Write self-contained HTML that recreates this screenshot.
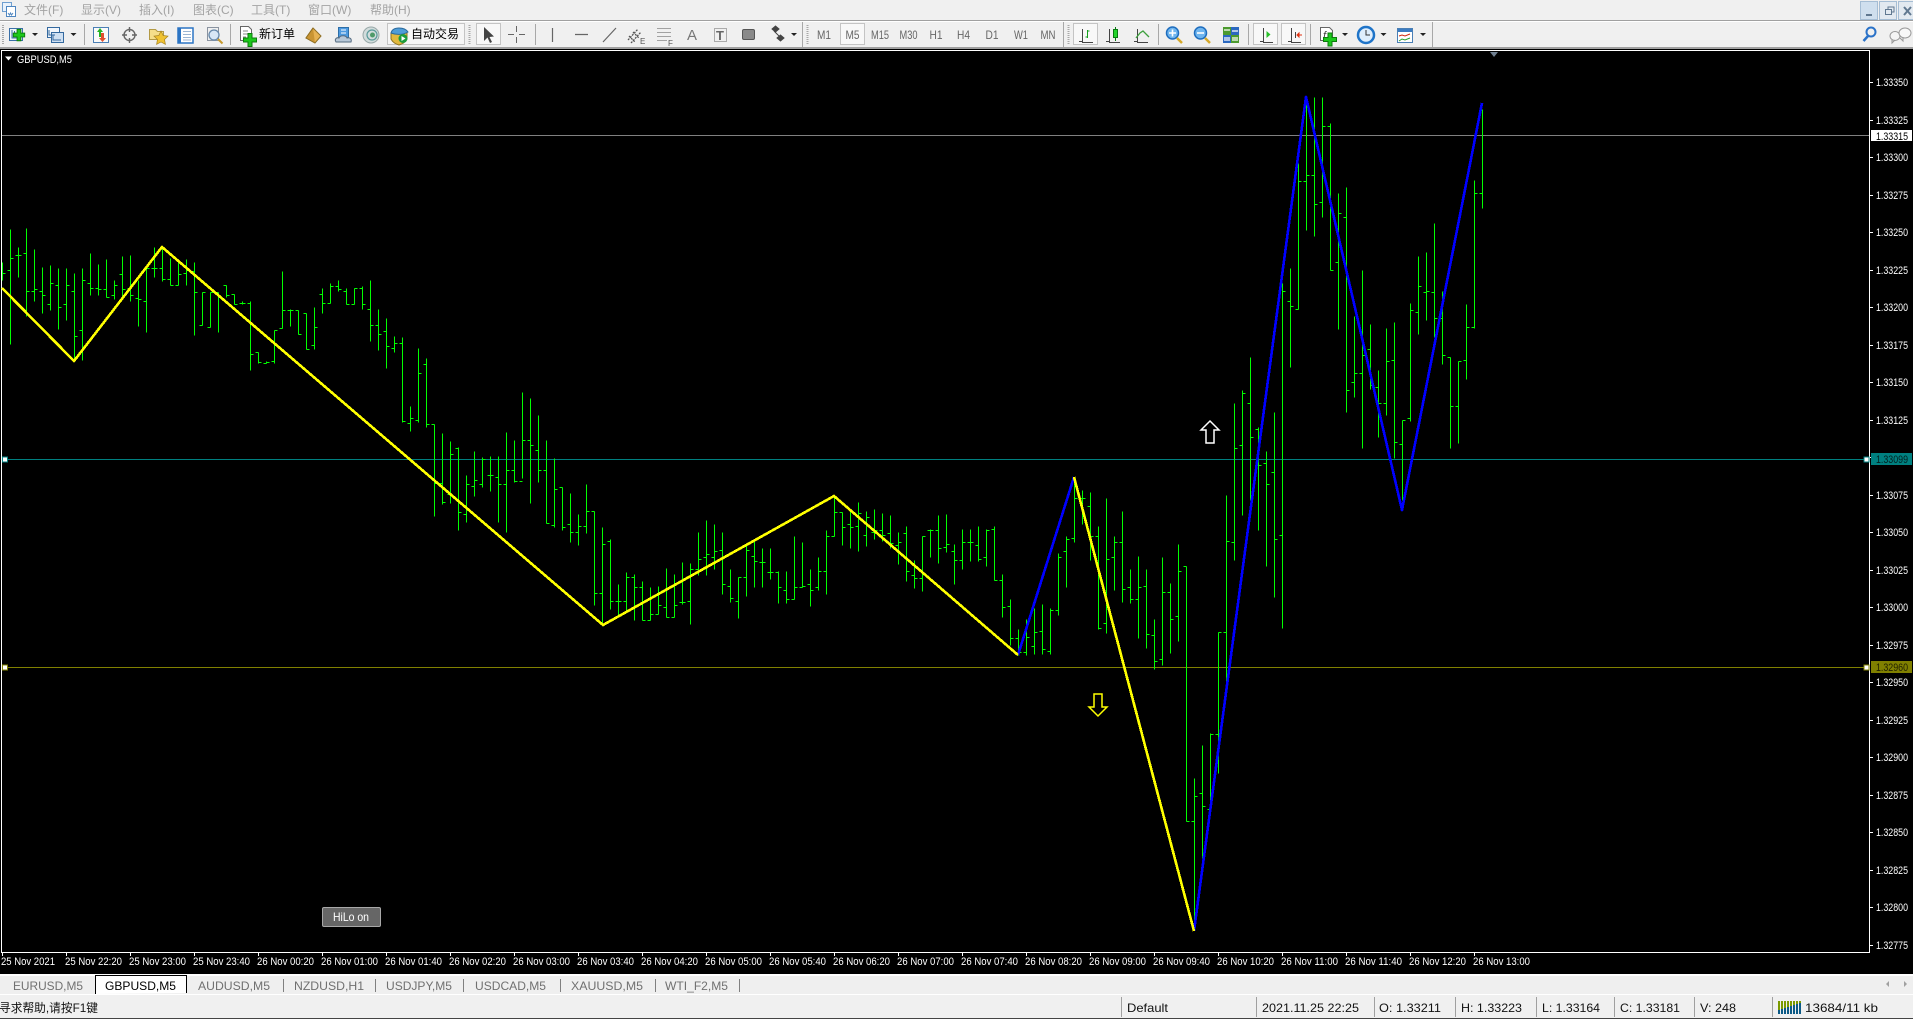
<!DOCTYPE html>
<html lang="zh">
<head>
<meta charset="utf-8">
<title>GBPUSD,M5</title>
<style>
html,body{margin:0;padding:0;width:1913px;height:1019px;overflow:hidden;background:#f0f0f0}
svg{display:block;position:absolute;left:0;top:0}
text{font-family:"Liberation Sans","Noto Sans CJK SC",sans-serif;font-size:11px;white-space:pre}
.m{fill:#a3a3a3;font-size:12px}
.t{fill:#666;font-size:11px;text-anchor:middle}
.a{fill:#fff;font-size:11px}
.s{fill:#111;font-size:12px}
.tab{fill:#707070;font-size:12px}
.i{stroke:#555;fill:none;stroke-width:1}
.plus{fill:#1cc81c;stroke:#0b7d0b;stroke-width:1}
</style>
</head>
<body>
<svg width="1913" height="1019" viewBox="0 0 1913 1019" xmlns="http://www.w3.org/2000/svg">
<rect width="1913" height="1019" fill="#f0f0f0"/>

<!-- menu bar -->
<g>
<rect x="2.5" y="2.5" width="9" height="9" fill="#eaf2fb" stroke="#6f9fd0"/>
<rect x="6.5" y="6.5" width="9" height="10" fill="#fff" stroke="#4f86c0"/>
<path d="M8 13l1.5 2 1-2 1 2 1.5-2" stroke="#4f86c0" fill="none"/>
<text class="m" x="24" y="14">文件(F)</text>
<text class="m" x="81" y="14">显示(V)</text>
<text class="m" x="139" y="14">插入(I)</text>
<text class="m" x="193" y="14">图表(C)</text>
<text class="m" x="251" y="14">工具(T)</text>
<text class="m" x="308" y="14">窗口(W)</text>
<text class="m" x="370" y="14">帮助(H)</text>
<rect x="1860.5" y="1.5" width="17" height="18" fill="#cfdfee" stroke="#a5bdd4"/>
<rect x="1879.5" y="1.5" width="17" height="18" fill="#e2e9f0" stroke="#a5bdd4"/>
<rect x="1898.5" y="1.5" width="17" height="18" fill="#e2e9f0" stroke="#a5bdd4"/>
<path d="M1866 15h6" stroke="#607890" stroke-width="2"/>
<path d="M1885.500 9.500h6v5h-6zM1888 9V7h6v5h-2" stroke="#607890" fill="none"/>
<path d="M1904 7l7 8M1911 7l-7 8" stroke="#607890" stroke-width="2"/>
</g>
<rect x="0" y="20" width="1913" height="1" fill="#a0a0a0"/>
<rect x="0" y="21" width="1913" height="1" fill="#fff"/>

<!-- toolbar -->
<g>
<path d="M3 25V45M469.5 25V45M807.5 25V45M1068.5 25V45" stroke="#a8a8a8" stroke-width="2" stroke-dasharray="1 1"/>
<path d="M84.5 24V45M230.5 24V45M535.5 24V45M802.5 22V47M1063.5 22V47M1158.5 24V45M1248.5 24V45M1310.5 24V45M1432.5 22V47" stroke="#a8a8a8"/>

<!-- new chart -->
<rect x="9.5" y="28.5" width="13" height="12" fill="#f0f6fc" stroke="#3a70a8"/>
<path d="M12 30v8h8M14.500 31v5" stroke="#3a70a8" fill="none"/>
<path class="plus" d="M18.500 33.500h4v4h4v4h-4v4h-4v-4h-4v-4h4z" transform="translate(-.5,-2.500) scale(.95)"/>
<path d="M32 33h6l-3 3z" fill="#222"/>
<!-- profiles -->
<rect x="47.500" y="27.500" width="12" height="10" fill="#f2f6fb" stroke="#34699f"/>
<rect x="51.500" y="32.500" width="12" height="10" fill="#cfe0f2" stroke="#34699f"/>
<path d="M49 30v5h6M53 35v5h8" stroke="#34699f" fill="none"/>
<path d="M70.500 33h6l-3 3z" fill="#222"/>
<!-- market watch -->
<rect x="93.500" y="27.500" width="15" height="15" fill="#fafafa" stroke="#4a7fb5"/>
<path d="M99 37v-5h-2l3-4 3 4h-2v5z" fill="#23b423"/>
<path d="M101 33v5h-2l3.500 4 3.500-4h-2v-5z" fill="#e0502e"/>
<!-- navigator -->
<circle cx="129.500" cy="35" r="5.500" fill="none" stroke="#666" stroke-width="1.400"/>
<path d="M129.500 27V32M129.500 38V43M122 35H127M132 35H137" stroke="#666" stroke-width="1.400"/>
<!-- favourites -->
<path d="M149.500 29.500h6l2 2h6v8h-14z" fill="#f5de8a" stroke="#b39a45"/>
<path d="M161 31l2.200 4.500 4.800.6-3.500 3.400.9 4.800-4.400-2.300-4.400 2.300.9-4.800-3.500-3.400 4.800-.6z" fill="#efc232" stroke="#a8841e" stroke-width=".7"/>
<!-- terminal -->
<rect x="178" y="28" width="15" height="15" fill="#fff" stroke="#2b74c4" stroke-width="1.500"/>
<rect x="178" y="28" width="3" height="15" fill="#2b74c4"/>
<path d="M183 31.500h8M183 34.500h8M183 37.500h8M183 40h8" stroke="#9cb6d4"/>
<!-- tester -->
<rect x="207.500" y="27.500" width="11" height="13" fill="#f0f0f0" stroke="#8a93a0"/>
<circle cx="214" cy="35" r="5" fill="#d7e6f5" stroke="#6688aa" stroke-width="1.300"/>
<path d="M218 39l4.500 4.500" stroke="#c69a2e" stroke-width="2"/>
<!-- new order -->
<path d="M240.500 26.500h8l3 3v11h-11z" fill="#fff" stroke="#666"/>
<path d="M243 31h5M243 34h6M243 37h3" stroke="#888"/>
<path class="plus" d="M248 33.500h4v4.500h4.500v4h-4.500v4.500h-4v-4.500h-4.500v-4h4.500z"/>
<text x="259" y="38" fill="#000" style="font-size:12px" textLength="36" lengthAdjust="spacingAndGlyphs">新订单</text>
<!-- gold -->
<path d="M313 28l8 8-6 7-9-5z" fill="#e6b252" stroke="#8f6f24"/>
<path d="M313 28l-7 10 9 5" fill="#c99432" stroke="#8f6f24"/>
<!-- cloud -->
<rect x="338.500" y="27.500" width="10" height="10" fill="#4d9ae0" stroke="#2c6ea8"/>
<path d="M341 30h5M341 33h5" stroke="#fff"/>
<path d="M336 42c-2-3 1-5 3-4 1-3 7-3 8 0 3-1 5 1 4 4z" fill="#b8c8d8" stroke="#556b80"/>
<!-- signals -->
<circle cx="371" cy="35" r="8" fill="#d2dcdc" stroke="#98a8a8"/>
<circle cx="372" cy="35" r="5" fill="none" stroke="#5a9a9a" stroke-width="1.200"/>
<circle cx="372.500" cy="35" r="2.500" fill="#4f9a6a"/>
<!-- auto trading button -->
<rect x="387.500" y="23.500" width="77" height="21" fill="#f6f6f6" stroke="#c4c4c4"/>
<path d="M391 33h16v6c-2 4-5 5-8 6-3-1-6-2-8-6z" fill="#e2b93f" stroke="#8d7320"/>
<path d="M391 33c1-4 4-5 8-5s7 1 9 4c-5 3-12 3-17 1z" fill="#4f9dd8" stroke="#2b6a9c"/>
<circle cx="403" cy="38.500" r="4.500" fill="#1c9c3c"/>
<path d="M401.500 36l4 2.500-4 2.500z" fill="#fff"/>
<text x="411" y="38" fill="#000" style="font-size:12px" textLength="48" lengthAdjust="spacingAndGlyphs">自动交易</text>
<!-- cursor -->
<rect x="476.500" y="23.500" width="24" height="21" fill="#f8f8f8" stroke="#c4c4c4"/>
<path d="M484 27l0 14 3.500-3.500 2.500 5.500 2-1-2.500-5 4.500-.5z" fill="#444"/>
<path d="M516.500 26V32M516.500 37V43M508 34.500H514M519 34.500H525" stroke="#666"/>
<path d="M552.500 28V42M575 34.500H588M603 42L616 28" stroke="#666" stroke-width="1.200"/>
<!-- channel -->
<path d="M628 40l10-11M631 43l10-11M629 36l6 6M633 32l6 6" stroke="#555" stroke-width="1.300" stroke-dasharray="2 1"/>
<text x="640" y="44" fill="#555" style="font-size:8px">E</text>
<!-- fibo -->
<path d="M657.500 28.500H671M657.500 32.500H671M657.500 36.500H671M657.500 40.500H667" stroke="#555" stroke-dasharray="1 1"/>
<text x="668" y="46" fill="#555" style="font-size:8px">F</text>
<text x="687" y="40" fill="#777" style="font-size:15px">A</text>
<rect x="714.500" y="28.500" width="12" height="13" fill="none" stroke="#666" stroke-dasharray="1 1"/>
<text x="716" y="40" fill="#666" style="font-size:13px;font-weight:bold">T</text>
<rect x="742.500" y="29.500" width="12" height="10" rx="1.500" fill="#8a8a8a" stroke="#555"/>
<path d="M772 29l3.500-3 3.500 3-3.500 3zM777 38l3.500-3 3.500 3-3.500 3zM774 31l6 6" fill="#444" stroke="#444"/>
<path d="M791 33h6l-3 3z" fill="#222"/>
<!-- periods -->
<rect x="840.500" y="23.500" width="24" height="21" fill="#f8f8f8" stroke="#c4c4c4"/>
<text class="t" x="824" y="39" style="font-size:12px" textLength="14" lengthAdjust="spacingAndGlyphs">M1</text>
<text class="t" x="852.500" y="39" style="font-size:12px" textLength="14" lengthAdjust="spacingAndGlyphs">M5</text>
<text class="t" x="880" y="39" style="font-size:12px" textLength="18" lengthAdjust="spacingAndGlyphs">M15</text>
<text class="t" x="908.500" y="39" style="font-size:12px" textLength="18" lengthAdjust="spacingAndGlyphs">M30</text>
<text class="t" x="936" y="39" style="font-size:12px" textLength="13" lengthAdjust="spacingAndGlyphs">H1</text>
<text class="t" x="963.500" y="39" style="font-size:12px" textLength="13" lengthAdjust="spacingAndGlyphs">H4</text>
<text class="t" x="992" y="39" style="font-size:12px" textLength="13" lengthAdjust="spacingAndGlyphs">D1</text>
<text class="t" x="1021" y="39" style="font-size:12px" textLength="14" lengthAdjust="spacingAndGlyphs">W1</text>
<text class="t" x="1048" y="39" style="font-size:12px" textLength="15" lengthAdjust="spacingAndGlyphs">MN</text>
<!-- chart types -->
<rect x="1073.500" y="23.500" width="24" height="21" fill="#f8f8f8" stroke="#c4c4c4"/>
<path d="M1082.500 29V42.500H1093M1079 41.500H1082" stroke="#444" fill="none"/>
<path d="M1087.500 30V38M1087.500 31h2M1085.500 37h2" stroke="#15a01c"/>
<path d="M1109.500 29V42.500H1120M1106 41.500H1109" stroke="#444" fill="none"/>
<path d="M1115.500 27V41" stroke="#087a10"/>
<rect x="1113.500" y="29.500" width="4" height="8" fill="#22d42a" stroke="#087a10"/>
<path d="M1137.500 29V42.500H1148M1134 41.500H1137" stroke="#444" fill="none"/>
<path d="M1136 38l4-5 3-2 3 3 3 3" stroke="#3ea03e" fill="none" stroke-width="1.300"/>
<!-- zoom -->
<circle cx="1172.500" cy="33" r="6" fill="#6fb5ee" stroke="#1e6dbe" stroke-width="1.500"/>
<path d="M1169 33h7M1172.500 29.500v7" stroke="#fff" stroke-width="1.600"/>
<path d="M1177 38l5 5" stroke="#d6a92a" stroke-width="2.500"/>
<circle cx="1200.500" cy="33" r="6" fill="#6fb5ee" stroke="#1e6dbe" stroke-width="1.500"/>
<path d="M1197 33h7" stroke="#fff" stroke-width="1.600"/>
<path d="M1205 38l5 5" stroke="#d6a92a" stroke-width="2.500"/>
<!-- grid -->
<rect x="1223" y="27" width="8" height="8" fill="#4b9a2e"/>
<rect x="1231" y="27" width="8" height="8" fill="#2b68c0"/>
<rect x="1223" y="35" width="8" height="8" fill="#2b68c0"/>
<rect x="1231" y="35" width="8" height="8" fill="#4b9a2e"/>
<path d="M1224 30h6M1232 31h6M1224 38h6M1232 38h6M1224 40h6M1232 40h6" stroke="#fff" stroke-width="1.200"/>
<!-- autoscroll / shift -->
<rect x="1253.500" y="23.500" width="24" height="21" fill="#f8f8f8" stroke="#c4c4c4"/>
<path d="M1263.500 28V42.500H1273M1260 41.500H1263" stroke="#444" fill="none"/>
<path d="M1266.500 31v7l4-3.500z" fill="#2ac02a"/>
<rect x="1281.500" y="23.500" width="24" height="21" fill="#f8f8f8" stroke="#c4c4c4"/>
<path d="M1291.500 28V42.500H1301M1288 41.500H1291M1295.500 32V38" stroke="#444" fill="none"/>
<path d="M1302 35h-3M1299 33l-2 2 2 2z" stroke="#e03010" fill="#e03010"/>
<!-- indicators -->
<path d="M1320.500 27.500h9l3 3v10h-12z" fill="#fff" stroke="#666"/>
<text x="1323" y="39" fill="#444" style="font-size:11px;font-style:italic">f</text>
<path class="plus" d="M1328 34h4v4.500h4.500v4h-4.500v4.500h-4v-4.500h-4.500v-4h4.500z" transform="translate(0,-1)"/>
<path d="M1342 33h6l-3 3z" fill="#222"/>
<!-- clock -->
<circle cx="1366" cy="35" r="8" fill="#dfeefc" stroke="#1f74c8" stroke-width="2.500"/>
<path d="M1366 30v5h4" stroke="#333" fill="none"/>
<path d="M1380.500 33h6l-3 3z" fill="#222"/>
<!-- templates -->
<rect x="1397.500" y="28.500" width="15" height="14" fill="#fff" stroke="#4a7fb5"/>
<rect x="1398" y="29" width="14" height="3" fill="#3b7cc2"/>
<path d="M1399 36l3-1 3 1 5-2" stroke="#d02a10" fill="none"/>
<path d="M1399 41l3-2 3 1 5-2" stroke="#2aa02a" fill="none"/>
<path d="M1420 33h6l-3 3z" fill="#222"/>
<!-- search / chat -->
<circle cx="1871" cy="32" r="4.500" fill="none" stroke="#2a72c8" stroke-width="2"/>
<path d="M1868 36l-4.500 5" stroke="#2a72c8" stroke-width="2.500"/>
<ellipse cx="1895" cy="36" rx="5" ry="4.500" fill="#f5f5f5" stroke="#999"/>
<ellipse cx="1905" cy="33" rx="6" ry="5" fill="#f8f8f8" stroke="#999"/>
<path d="M1892 40v3l3-3M1903 38v3l-3-3" fill="none" stroke="#999"/>
</g>
<rect x="0" y="47" width="1913" height="2" fill="#a0a0a0"/>

<!-- chart -->
<rect x="0" y="49" width="1913" height="925" fill="#000"/>
<path d="M1.500 50.500H1869.500V952.500H1.500Z" fill="none" stroke="#fff"/>
<path d="M1490 52h8l-4 5z" fill="#708090"/>
<path d="M5 46.500h7l-3.500 4z" fill="#fff" transform="translate(0,10)"/>
<text class="a" x="17" y="63" textLength="55" lengthAdjust="spacingAndGlyphs">GBPUSD,M5</text>

<!-- horizontal levels -->
<path d="M2 135.500H1869" stroke="#808080"/>
<path d="M2 459.500H1869" stroke="#008080"/>
<path d="M2 667.500H1869" stroke="#808000"/>
<rect x="2.500" y="457" width="5" height="5" fill="#fff" stroke="#008080"/>
<rect x="1864" y="457" width="5" height="5" fill="#fff" stroke="#008080"/>
<rect x="2.500" y="665" width="5" height="5" fill="#fff" stroke="#808000"/>
<rect x="1864" y="665" width="5" height="5" fill="#fff" stroke="#808000"/>

<!-- bars -->
<g transform="translate(.5,.5)" shape-rendering="crispEdges">
<path stroke="#00ff00" stroke-width="1" fill="none" d="M2 262V280M2 273h3
M10 229V344M7 270h3M10 258h3M18 247V277M15 255h3M18 255h3M26 228V316M23 253h3M26 291h3M34 249V301M31 291h3M34 289h3
M42 267V313M39 291h3M42 295h3M50 265V310M47 304h3M50 283h3M58 268V329M55 285h3M58 307h3M66 268V320M63 304h3M66 285h3
M74 273V360M71 291h3M74 336h3M82 268V360M79 330h3M82 280h3M90 253V295M87 283h3M90 288h3M98 264V295M95 288h3M98 289h3
M106 259V297M103 289h3M106 297h3M114 280V299M111 295h3M114 285h3M122 256V297M119 274h3M122 289h3M130 255V301M127 288h3M130 295h3
M138 280V326M135 298h3M138 299h3M146 267V332M143 301h3M146 268h3M154 247V277M151 268h3M154 268h3M162 247V281M159 268h3M162 279h3
M170 258V285M167 279h3M170 285h3M178 262V285M175 285h3M178 274h3M186 259V285M183 273h3M186 270h3M194 262V335M191 271h3M194 292h3
M202 292V325M199 325h3M202 292h3M210 292V327M207 327h3M210 292h3M218 292V332M215 292h3M218 297h3M226 285V297M223 285h3M226 295h3
M234 294V304M231 294h3M234 304h3M242 301V304M239 303h3M242 303h3M250 301V370M247 303h3M250 354h3M258 352V363M255 352h3M258 362h3
M266 361V363M263 363h3M266 362h3M274 330V363M271 361h3M274 330h3M282 271V328M279 328h3M282 310h3M290 309V326M287 310h3M290 310h3
M298 310V334M295 310h3M298 334h3M306 313V349M303 313h3M306 349h3M314 307V349M311 345h3M314 327h3M322 288V313M319 294h3M322 303h3
M330 283V303M327 303h3M330 286h3M338 280V291M335 286h3M338 289h3M346 288V304M343 291h3M346 304h3M354 288V304M351 304h3M354 288h3
M362 286V309M359 288h3M362 304h3M370 280V341M367 309h3M370 325h3M378 309V350M375 325h3M378 334h3M386 318V368M383 331h3M386 346h3
M394 336V352M391 348h3M394 343h3M402 337V422M399 343h3M402 421h3M410 406V431M407 423h3M410 418h3M418 348V422M415 420h3M418 373h3
M426 358V427M423 364h3M426 424h3M434 424V516M431 424h3M434 483h3M442 433V504M439 483h3M442 502h3M450 441V503M447 494h3M450 454h3
M458 447V530M455 448h3M458 512h3M466 475V522M463 514h3M466 484h3M474 451V496M471 486h3M474 480h3M482 457V487M479 484h3M482 459h3
M490 456V491M487 475h3M490 475h3M498 456V522M495 477h3M498 484h3M506 432V532M503 484h3M506 470h3M514 440V482M511 470h3M514 481h3
M522 392V478M519 481h3M522 440h3M530 398V503M527 440h3M530 445h3M538 415V482M535 450h3M538 470h3M546 440V523M543 470h3M546 523h3
M554 458V527M551 525h3M554 489h3M562 487V530M559 487h3M562 527h3M570 493V542M567 524h3M570 532h3M578 514V545M575 532h3M578 526h3
M586 484V533M583 526h3M586 511h3M594 511V605M591 511h3M594 593h3M602 527V625M599 593h3M602 544h3M610 539V609M607 541h3M610 601h3
M618 584V615M615 601h3M618 601h3M626 572V611M623 601h3M626 577h3M634 574V620M631 577h3M634 587h3M642 581V620M639 587h3M642 620h3
M650 587V620M647 620h3M650 614h3M658 586V614M655 614h3M658 605h3M666 568V617M663 607h3M666 617h3M674 574V617M671 617h3M674 605h3
M682 562V604M679 602h3M682 602h3M690 563V624M687 601h3M690 569h3M698 532V575M695 569h3M698 559h3M706 520V575M703 557h3M706 554h3
M714 524V569M711 557h3M714 551h3M722 532V594M719 550h3M722 584h3M730 569V602M727 586h3M730 598h3M738 577V618M735 601h3M738 577h3
M746 543V596M743 577h3M746 550h3M754 539V587M751 556h3M754 561h3M762 548V587M759 562h3M762 562h3M770 548V579M767 572h3M770 572h3
M778 571V603M775 572h3M778 587h3M786 571V603M783 590h3M786 599h3M794 536V599M791 599h3M794 587h3M802 542V587M799 587h3M802 586h3
M810 569V606M807 584h3M810 590h3M818 557V590M815 587h3M818 571h3M826 530V594M823 571h3M826 536h3M834 496V536M831 536h3M834 512h3
M842 512V545M839 512h3M842 527h3M850 511V548M847 524h3M850 527h3M858 502V551M855 526h3M858 513h3M866 511V546M863 535h3M866 517h3
M874 509V539M871 532h3M874 530h3M882 513V541M879 530h3M882 535h3M890 515V548M887 533h3M890 543h3M898 532V564M895 545h3M898 542h3
M906 526V581M903 533h3M906 571h3M914 560V588M911 575h3M914 578h3M922 536V591M919 578h3M922 536h3M930 529V557M927 530h3M930 530h3
M938 515V563M935 530h3M938 548h3M946 514V552M943 547h3M946 544h3M954 544V584M951 551h3M954 560h3M962 529V569M959 560h3M962 542h3
M970 529V561M967 542h3M970 542h3M978 526V561M975 545h3M978 559h3M986 529V566M983 557h3M986 530h3M994 526V580M991 529h3M994 580h3
M1002 574V617M999 580h3M1002 607h3M1010 599V645M1007 606h3M1010 638h3M1018 629V655M1015 638h3M1018 652h3M1026 619V655M1023 652h3M1026 637h3
M1034 608V654M1031 646h3M1034 632h3M1042 604V654M1039 631h3M1042 649h3M1050 608V654M1047 651h3M1050 610h3M1058 553V615M1055 610h3M1058 557h3
M1066 536V587M1063 551h3M1066 539h3M1074 477V542M1071 538h3M1074 498h3M1082 490V524M1079 498h3M1082 498h3M1090 492V560M1087 506h3M1090 536h3
M1098 526V629M1095 536h3M1098 628h3M1106 498V633M1103 623h3M1106 559h3M1114 536V590M1111 557h3M1114 542h3M1122 511V602M1119 542h3M1122 589h3
M1130 569V603M1127 587h3M1130 599h3M1138 556V638M1135 599h3M1138 587h3M1146 569V648M1143 586h3M1146 634h3M1154 619V669M1151 635h3M1154 661h3
M1162 557V665M1159 659h3M1162 592h3M1170 583V653M1167 592h3M1170 619h3M1178 544V641M1175 616h3M1178 571h3M1186 566V821M1183 566h3M1186 821h3
M1194 778V930M1191 821h3M1194 796h3M1202 745V858M1199 793h3M1202 806h3M1210 733V809M1207 809h3M1210 734h3M1218 632V773M1215 734h3M1218 632h3
M1226 495V685M1223 632h3M1226 541h3M1234 403V560M1231 542h3M1234 448h3M1242 390V515M1239 445h3M1242 393h3M1250 357V500M1247 403h3M1250 437h3
M1258 427V530M1255 429h3M1258 465h3M1266 451V566M1263 463h3M1266 484h3M1274 412V597M1271 472h3M1274 539h3M1282 283V628M1279 535h3M1282 291h3
M1290 268V367M1287 301h3M1290 306h3M1298 163V309M1295 309h3M1298 181h3M1306 103V230M1303 181h3M1306 175h3M1314 97V236M1311 175h3M1314 204h3
M1322 97V217M1319 202h3M1322 126h3M1330 123V270M1327 126h3M1330 270h3M1338 193V329M1335 262h3M1338 213h3M1346 187V412M1343 217h3M1346 390h3
M1354 316V397M1351 382h3M1354 373h3M1362 270V448M1359 373h3M1362 355h3M1370 324V389M1367 349h3M1370 385h3M1378 370V437M1375 387h3M1378 403h3
M1386 328V415M1383 403h3M1386 361h3M1394 322V458M1391 360h3M1394 442h3M1402 420V500M1399 444h3M1402 420h3M1410 303V421M1407 418h3M1410 310h3
M1418 256V334M1415 312h3M1418 286h3M1426 252V320M1423 292h3M1426 291h3M1434 223V337M1431 292h3M1434 318h3M1442 291V364M1439 318h3M1442 355h3
M1450 357V448M1447 357h3M1450 406h3M1458 361V443M1455 406h3M1458 361h3M1466 304V379M1463 360h3M1466 327h3M1474 180V328M1471 327h3M1474 193h3
M1482 109V208M1479 193h3"/>
</g>

<!-- zigzag -->
<g shape-rendering="crispEdges" fill="none" stroke-width="2.600" stroke-linejoin="round">
<polyline stroke="#0000ff" points="1018,655 1074,477"/>
<polyline stroke="#0000ff" points="1194,931 1306,97 1402,510 1482,103"/>
<polyline stroke="#ffff00" points="2,288 74,361 162,247 603,625 834,496 1018,655"/>
<polyline stroke="#ffff00" points="1074,477 1194,931"/>
</g>

<!-- arrows -->
<polygon points="1210,421 1219,430 1214,430 1214,443 1206,443 1206,430 1201,430" fill="#000" stroke="#fff" stroke-width="1.500"/>
<polygon points="1098,716 1089,707 1094,707 1094,694 1102,694 1102,707 1107,707" fill="#000" stroke="#ffff00" stroke-width="1.500"/>

<!-- hilo button -->
<rect x="322.500" y="907.500" width="58" height="19" rx="1.500" fill="#666" stroke="#a8a8a8"/>
<text class="a" x="333" y="921" style="font-size:12px" textLength="36" lengthAdjust="spacingAndGlyphs">HiLo on</text>

<!-- price axis -->
<path stroke="#fff" d="M1870 82.500h3M1870 120.500h3M1870 157.500h3M1870 195.500h3M1870 232.500h3M1870 270.500h3M1870 307.500h3M1870 345.500h3M1870 382.500h3M1870 420.500h3M1870 457.500h3M1870 495.500h3M1870 532.500h3M1870 570.500h3M1870 607.500h3M1870 645.500h3M1870 682.500h3M1870 720.500h3M1870 757.500h3M1870 795.500h3M1870 832.500h3M1870 870.500h3M1870 907.500h3M1870 945.500h3"/>
<g class="a">
<text class="a" x="1876" y="86" textLength="32" lengthAdjust="spacingAndGlyphs">1.33350</text>
<text class="a" x="1876" y="124" textLength="32" lengthAdjust="spacingAndGlyphs">1.33325</text>
<text class="a" x="1876" y="161" textLength="32" lengthAdjust="spacingAndGlyphs">1.33300</text>
<text class="a" x="1876" y="199" textLength="32" lengthAdjust="spacingAndGlyphs">1.33275</text>
<text class="a" x="1876" y="236" textLength="32" lengthAdjust="spacingAndGlyphs">1.33250</text>
<text class="a" x="1876" y="274" textLength="32" lengthAdjust="spacingAndGlyphs">1.33225</text>
<text class="a" x="1876" y="311" textLength="32" lengthAdjust="spacingAndGlyphs">1.33200</text>
<text class="a" x="1876" y="349" textLength="32" lengthAdjust="spacingAndGlyphs">1.33175</text>
<text class="a" x="1876" y="386" textLength="32" lengthAdjust="spacingAndGlyphs">1.33150</text>
<text class="a" x="1876" y="424" textLength="32" lengthAdjust="spacingAndGlyphs">1.33125</text>
<text class="a" x="1876" y="499" textLength="32" lengthAdjust="spacingAndGlyphs">1.33075</text>
<text class="a" x="1876" y="536" textLength="32" lengthAdjust="spacingAndGlyphs">1.33050</text>
<text class="a" x="1876" y="574" textLength="32" lengthAdjust="spacingAndGlyphs">1.33025</text>
<text class="a" x="1876" y="611" textLength="32" lengthAdjust="spacingAndGlyphs">1.33000</text>
<text class="a" x="1876" y="649" textLength="32" lengthAdjust="spacingAndGlyphs">1.32975</text>
<text class="a" x="1876" y="686" textLength="32" lengthAdjust="spacingAndGlyphs">1.32950</text>
<text class="a" x="1876" y="724" textLength="32" lengthAdjust="spacingAndGlyphs">1.32925</text>
<text class="a" x="1876" y="761" textLength="32" lengthAdjust="spacingAndGlyphs">1.32900</text>
<text class="a" x="1876" y="799" textLength="32" lengthAdjust="spacingAndGlyphs">1.32875</text>
<text class="a" x="1876" y="836" textLength="32" lengthAdjust="spacingAndGlyphs">1.32850</text>
<text class="a" x="1876" y="874" textLength="32" lengthAdjust="spacingAndGlyphs">1.32825</text>
<text class="a" x="1876" y="911" textLength="32" lengthAdjust="spacingAndGlyphs">1.32800</text>
<text class="a" x="1876" y="949" textLength="32" lengthAdjust="spacingAndGlyphs">1.32775</text>
</g>
<rect x="1871" y="130" width="41" height="11" fill="#fff"/>
<text x="1876" y="140" fill="#000" textLength="32" lengthAdjust="spacingAndGlyphs">1.33315</text>
<rect x="1871" y="453" width="41" height="12" fill="#008080"/>
<text x="1876" y="463" fill="#02201f" textLength="32" lengthAdjust="spacingAndGlyphs">1.33099</text>
<rect x="1871" y="661" width="41" height="12" fill="#808000"/>
<text x="1876" y="671" fill="#1f1f00" textLength="32" lengthAdjust="spacingAndGlyphs">1.32960</text>

<!-- time axis -->
<path stroke="#fff" d="M2.500 953v3M66.500 953v3M130.500 953v3M194.500 953v3M258.500 953v3M322.500 953v3M386.500 953v3M450.500 953v3M514.500 953v3M578.500 953v3M642.500 953v3M706.500 953v3M770.500 953v3M834.500 953v3M898.500 953v3M962.500 953v3M1026.500 953v3M1090.500 953v3M1154.500 953v3M1218.500 953v3M1282.500 953v3M1346.500 953v3M1410.500 953v3M1474.500 953v3"/>
<text class="a" x="1" y="965" textLength="54" lengthAdjust="spacingAndGlyphs">25 Nov 2021</text>
<text class="a" x="65" y="965" textLength="57" lengthAdjust="spacingAndGlyphs">25 Nov 22:20</text>
<text class="a" x="129" y="965" textLength="57" lengthAdjust="spacingAndGlyphs">25 Nov 23:00</text>
<text class="a" x="193" y="965" textLength="57" lengthAdjust="spacingAndGlyphs">25 Nov 23:40</text>
<text class="a" x="257" y="965" textLength="57" lengthAdjust="spacingAndGlyphs">26 Nov 00:20</text>
<text class="a" x="321" y="965" textLength="57" lengthAdjust="spacingAndGlyphs">26 Nov 01:00</text>
<text class="a" x="385" y="965" textLength="57" lengthAdjust="spacingAndGlyphs">26 Nov 01:40</text>
<text class="a" x="449" y="965" textLength="57" lengthAdjust="spacingAndGlyphs">26 Nov 02:20</text>
<text class="a" x="513" y="965" textLength="57" lengthAdjust="spacingAndGlyphs">26 Nov 03:00</text>
<text class="a" x="577" y="965" textLength="57" lengthAdjust="spacingAndGlyphs">26 Nov 03:40</text>
<text class="a" x="641" y="965" textLength="57" lengthAdjust="spacingAndGlyphs">26 Nov 04:20</text>
<text class="a" x="705" y="965" textLength="57" lengthAdjust="spacingAndGlyphs">26 Nov 05:00</text>
<text class="a" x="769" y="965" textLength="57" lengthAdjust="spacingAndGlyphs">26 Nov 05:40</text>
<text class="a" x="833" y="965" textLength="57" lengthAdjust="spacingAndGlyphs">26 Nov 06:20</text>
<text class="a" x="897" y="965" textLength="57" lengthAdjust="spacingAndGlyphs">26 Nov 07:00</text>
<text class="a" x="961" y="965" textLength="57" lengthAdjust="spacingAndGlyphs">26 Nov 07:40</text>
<text class="a" x="1025" y="965" textLength="57" lengthAdjust="spacingAndGlyphs">26 Nov 08:20</text>
<text class="a" x="1089" y="965" textLength="57" lengthAdjust="spacingAndGlyphs">26 Nov 09:00</text>
<text class="a" x="1153" y="965" textLength="57" lengthAdjust="spacingAndGlyphs">26 Nov 09:40</text>
<text class="a" x="1217" y="965" textLength="57" lengthAdjust="spacingAndGlyphs">26 Nov 10:20</text>
<text class="a" x="1281" y="965" textLength="57" lengthAdjust="spacingAndGlyphs">26 Nov 11:00</text>
<text class="a" x="1345" y="965" textLength="57" lengthAdjust="spacingAndGlyphs">26 Nov 11:40</text>
<text class="a" x="1409" y="965" textLength="57" lengthAdjust="spacingAndGlyphs">26 Nov 12:20</text>
<text class="a" x="1473" y="965" textLength="57" lengthAdjust="spacingAndGlyphs">26 Nov 13:00</text>

<!-- tab bar -->
<rect x="0" y="974" width="1913" height="2" fill="#fff"/>
<rect x="0" y="976" width="1913" height="18" fill="#efefef"/>
<path d="M95.500 994V975.500H186.500V993" fill="#fff" stroke="#000"/>
<path d="M283.500 979V992M375.500 979V992M463.500 979V992M560.500 979V992M655.500 979V992M739.500 979V992" stroke="#808080"/>
<text class="tab" x="13" y="990" textLength="70" lengthAdjust="spacingAndGlyphs">EURUSD,M5</text>
<text class="tab" x="105" y="990" style="fill:#000" textLength="71" lengthAdjust="spacingAndGlyphs">GBPUSD,M5</text>
<text class="tab" x="198" y="990" textLength="72" lengthAdjust="spacingAndGlyphs">AUDUSD,M5</text>
<text class="tab" x="294" y="990" textLength="70" lengthAdjust="spacingAndGlyphs">NZDUSD,H1</text>
<text class="tab" x="386" y="990" textLength="66" lengthAdjust="spacingAndGlyphs">USDJPY,M5</text>
<text class="tab" x="475" y="990" textLength="71" lengthAdjust="spacingAndGlyphs">USDCAD,M5</text>
<text class="tab" x="571" y="990" textLength="72" lengthAdjust="spacingAndGlyphs">XAUUSD,M5</text>
<text class="tab" x="665" y="990" textLength="63" lengthAdjust="spacingAndGlyphs">WTI_F2,M5</text>
<path d="M1889 981v6l-3-3zM1904 981v6l3-3z" fill="#a0a0a0"/>

<!-- status bar -->
<rect x="0" y="994" width="1913" height="1" fill="#fff"/>
<rect x="0" y="995" width="1913" height="23" fill="#f0f0f0"/>
<rect x="0" y="1018" width="1913" height="1" fill="#444"/>
<path d="M1121.500 997V1017M1256.500 997V1017M1374.500 997V1017M1455.500 997V1017M1536.500 997V1017M1614.500 997V1017M1694.500 997V1017M1772.500 997V1017" stroke="#a0a0a0"/>
<text class="s" x="-1" y="1012" textLength="99" lengthAdjust="spacingAndGlyphs">寻求帮助,请按F1键</text>
<text class="s" x="1127" y="1012" textLength="41" lengthAdjust="spacingAndGlyphs">Default</text>
<text class="s" x="1262" y="1012" textLength="97" lengthAdjust="spacingAndGlyphs">2021.11.25 22:25</text>
<text class="s" x="1379" y="1012" textLength="62" lengthAdjust="spacingAndGlyphs">O: 1.33211</text>
<text class="s" x="1461" y="1012" textLength="61" lengthAdjust="spacingAndGlyphs">H: 1.33223</text>
<text class="s" x="1542" y="1012" textLength="58" lengthAdjust="spacingAndGlyphs">L: 1.33164</text>
<text class="s" x="1620" y="1012" textLength="60" lengthAdjust="spacingAndGlyphs">C: 1.33181</text>
<text class="s" x="1700" y="1012" textLength="36" lengthAdjust="spacingAndGlyphs">V: 248</text>
<g>
<path d="M1779 1001v13M1782 1001v13M1785 1001v13M1788 1001v13M1791 1001v13M1794 1001v13M1797 1001v13M1800 1001v13" stroke="#7a9a00" stroke-width="2"/>
<path d="M1779 1010v4M1782 1009v5M1785 1008v6M1788 1007v7M1791 1006v8M1794 1005v9M1797 1004v10M1800 1003v11" stroke="#0c5a86" stroke-width="2"/>
</g>
<text class="s" x="1805" y="1012" textLength="73" lengthAdjust="spacingAndGlyphs">13684/11 kb</text>
</svg>
</body>
</html>
